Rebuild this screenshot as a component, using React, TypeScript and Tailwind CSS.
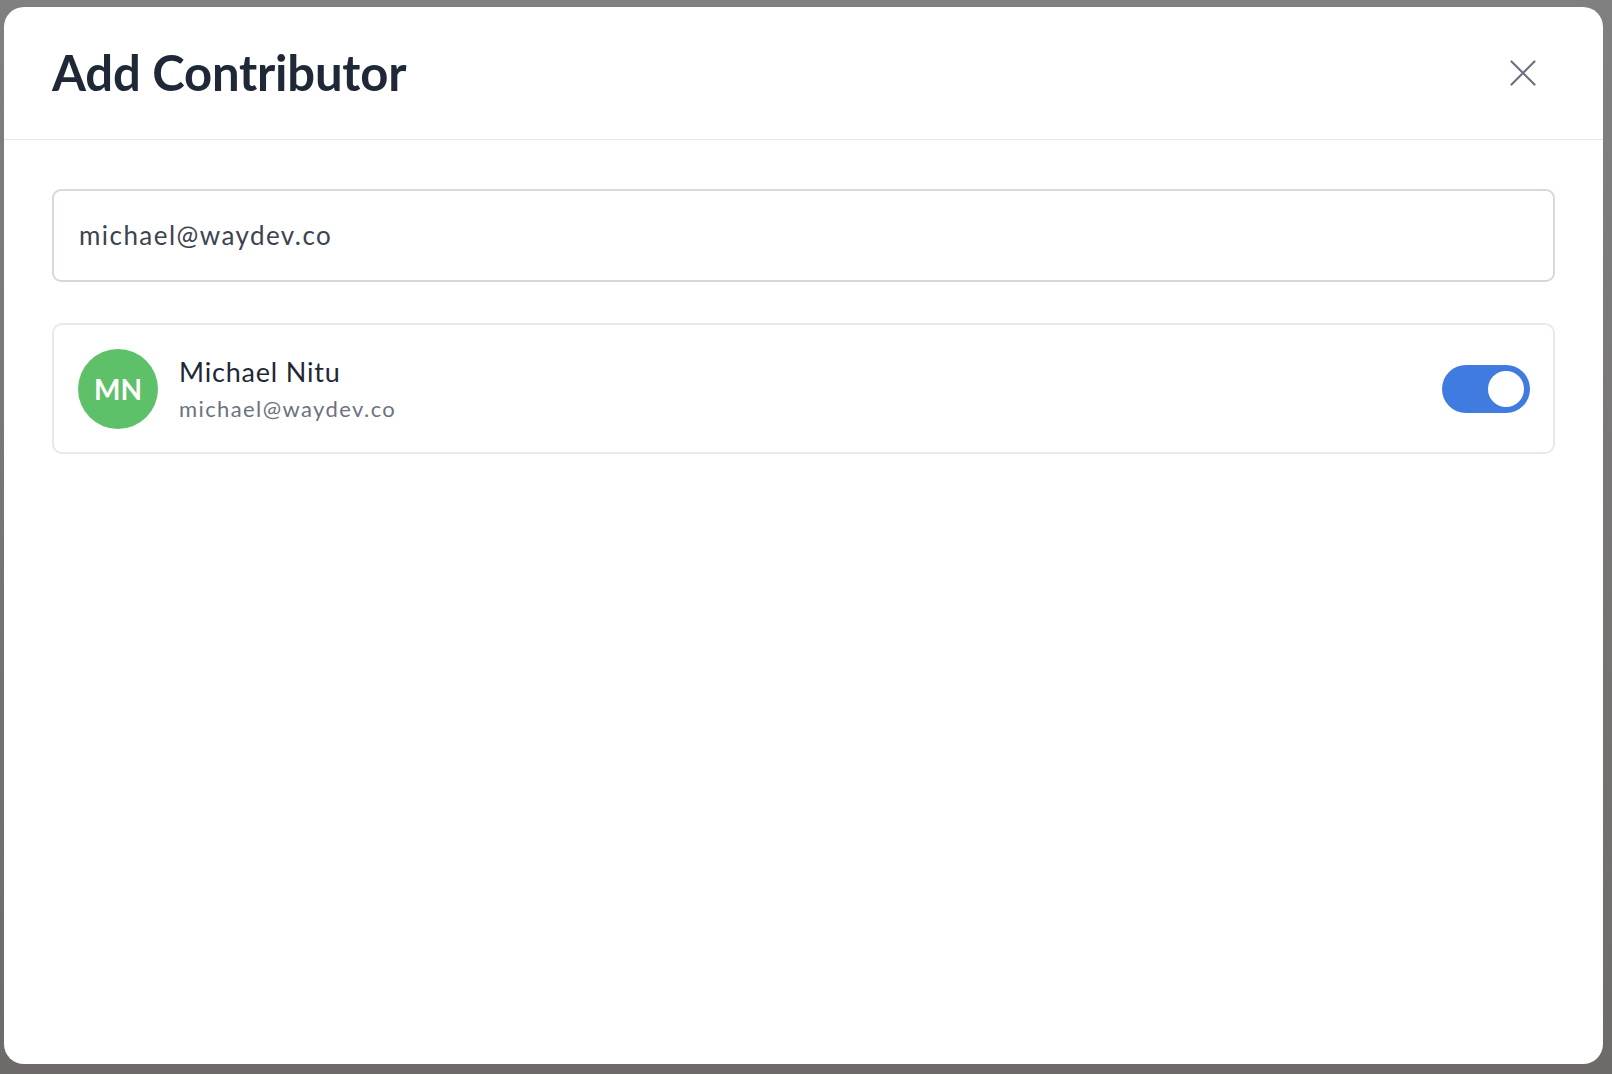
import React from 'react';

function CloseIcon() {
  return (
    <svg width="26" height="26" viewBox="0 0 26 26" fill="none">
      <path d="M1.5 1.5L24.5 24.5M24.5 1.5L1.5 24.5" stroke="#6b7280" strokeWidth="2.2" strokeLinecap="round" />
    </svg>
  );
}

function Toggle({ on }: { on: boolean }) {
  return (
    <div
      className={
        on
          ? 'flex h-[48px] w-[88px] items-center justify-end rounded-full bg-[#407be0] px-[6px]'
          : 'flex h-[48px] w-[88px] items-center justify-start rounded-full bg-gray-300 px-[6px]'
      }
    >
      <div className="h-[36px] w-[36px] rounded-full bg-white" />
    </div>
  );
}

export default function App() {
  const [query] = React.useState('michael@waydev.co');

  return (
    <div
      className="flex h-screen w-full bg-gradient-to-b from-[#808080] to-[#6e6a69] pb-[10px] pl-[4px] pr-[9px] pt-[7px]"
      style={{ fontFamily: 'Lato, "Open Sans", sans-serif' }}
    >
      <div className="flex flex-1 flex-col overflow-hidden rounded-[20px] bg-white">
        <div className="flex h-[133px] items-center justify-between border-b border-[#e5e7eb] pl-12 pr-[67px]">
          <h1 className="text-[49px] font-bold tracking-[-0.2px] text-[#1f2837]">Add Contributor</h1>
          <button className="flex h-[26px] w-[26px] items-center justify-center">
            <CloseIcon />
          </button>
        </div>

        <div className="px-12 pt-[49px]">
          <div className="flex h-[93px] items-center rounded-[9px] border-2 border-[#d5d8de] px-[25px]">
            <span className="text-[26px] tracking-[1.45px] text-[#3d4350]">{query}</span>
          </div>

          <div className="mt-[41px] flex h-[131px] items-center rounded-[10px] border-2 border-[#e8e9ed] pl-[24px] pr-[23px]">
            <div className="flex h-[80px] w-[80px] items-center justify-center rounded-full bg-[#5ec16a]">
              <span className="text-[28px] font-bold text-white">MN</span>
            </div>
            <div className="ml-[21px] flex flex-1 flex-col">
              <span className="text-[27px] leading-[34px] tracking-[0.8px] text-[#1f2837]">Michael Nitu</span>
              <span className="mt-[6px] text-[22px] leading-[28px] tracking-[1.4px] text-[#6b7280]">michael@waydev.co</span>
            </div>
            <Toggle on={true} />
          </div>
        </div>
      </div>
    </div>
  );
}
